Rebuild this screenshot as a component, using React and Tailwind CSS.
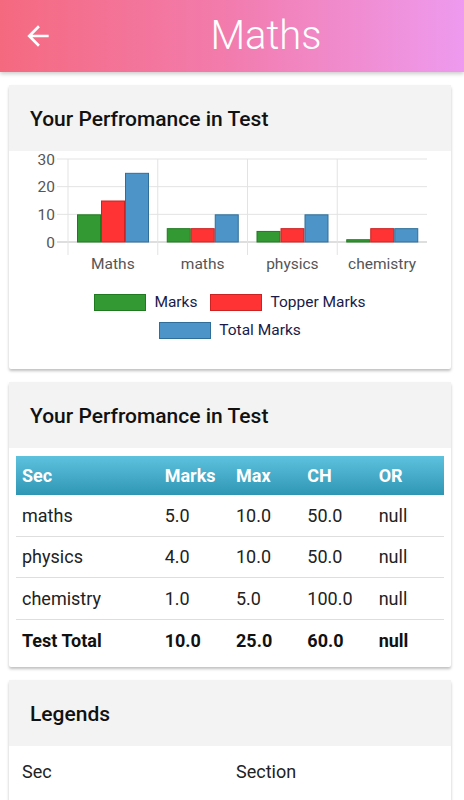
import React from "react";

const chartData = [
  { label: "Maths", marks: 10, topper: 15, total: 25 },
  { label: "maths", marks: 5, topper: 5, total: 10 },
  { label: "physics", marks: 4, topper: 5, total: 10 },
  { label: "chemistry", marks: 1, topper: 5, total: 5 },
];

const rows = [
  ["maths", "5.0", "10.0", "50.0", "null"],
  ["physics", "4.0", "10.0", "50.0", "null"],
  ["chemistry", "1.0", "5.0", "100.0", "null"],
];

const series = [
  { key: "marks", fill: "#339933", stroke: "#1f7a1f" },
  { key: "topper", fill: "#ff3333", stroke: "#cc2222" },
  { key: "total", fill: "#4d94c8", stroke: "#2e6e99" },
];

// chart geometry (px inside the card)
const X0 = 59;
const X1 = 418;
const Y0 = 91;
const UNIT = 2.767;
const CAT = (X1 - X0) / 4;

const BarChart = () => (
  <svg width="442" height="142" className="block">
    {/* horizontal grid */}
    {[0, 10, 20, 30].map((v) => (
      <g key={v}>
        <line
          x1={48}
          x2={X1}
          y1={Y0 - v * UNIT}
          y2={Y0 - v * UNIT}
          stroke={v === 0 ? "#bdbdbd" : "#e3e3e3"}
          strokeWidth="1"
        />
        <text
          x={46}
          y={Y0 - v * UNIT + 5.5}
          textAnchor="end"
          fontSize="15.5"
          fill="#555"
        >
          {v}
        </text>
      </g>
    ))}
    {/* vertical grid */}
    {[0, 1, 2, 3].map((i) => (
      <line
        key={i}
        x1={X0 + i * CAT}
        x2={X0 + i * CAT}
        y1={8}
        y2={104}
        stroke="#e3e3e3"
        strokeWidth="1"
      />
    ))}
    {chartData.map((d, i) => {
      const c = X0 + i * CAT;
      return (
        <g key={d.label}>
          {series.map((s, j) => {
            const h = d[s.key] * UNIT;
            return (
              <rect
                key={s.key}
                x={c + 9 + j * 24 + 0.5}
                y={Y0 - h + 0.5}
                width={23}
                height={h - 0.5}
                fill={s.fill}
                stroke={s.stroke}
                strokeWidth="1"
              />
            );
          })}
          <text
            x={c + CAT / 2}
            y={117.5}
            textAnchor="middle"
            fontSize="15.5"
            fill="#555"
          >
            {d.label}
          </text>
        </g>
      );
    })}
  </svg>
);

const LegendItem = ({ fill, stroke, label }) => (
  <div className="flex items-center gap-[8px]">
    <span
      className="block w-[52px] h-[17px] border"
      style={{ backgroundColor: fill, borderColor: stroke }}
    />
    <span className="text-[15.5px] leading-none text-[#1a1a48]">{label}</span>
  </div>
);

const Card = ({ title, children, className = "" }) => (
  <div
    className={
      "bg-white rounded-[2px] shadow-[0_2px_3px_rgba(0,0,0,0.25)] " + className
    }
  >
    <div className="h-[66px] bg-[#f3f3f3] flex items-center px-[21px] pt-[4px]">
      <h2 className="text-[21px] font-medium text-[#111]">{title}</h2>
    </div>
    {children}
  </div>
);

export default function App() {
  return (
    <div
      className="min-h-screen bg-white"
      style={{ fontFamily: "Roboto, 'Noto Sans', sans-serif" }}
    >
      {/* top bar */}
      <header className="h-[72px] flex items-center bg-gradient-to-r from-[#f5697f] via-[#f27cae] to-[#ee9aef] shadow-[0_2px_4px_rgba(0,0,0,0.2)] relative z-10">
        <button className="w-[68px] h-full flex items-center pl-[22px]">
          <svg width="32" height="32" viewBox="0 0 24 24" fill="white">
            <path d="M20 11H7.83l5.59-5.59L12 4l-8 8 8 8 1.41-1.41L7.83 13H20v-2z" />
          </svg>
        </button>
        <h1 className="flex-1 text-center text-white text-[40px] font-light leading-none">
          Maths
        </h1>
      </header>

      <main className="pl-[9px] pr-[13px] pt-[13px] flex flex-col gap-[13px]">
        {/* chart card */}
        <Card title="Your Perfromance in Test">
          <BarChart />
          <div className="flex flex-col items-center gap-[11px] pt-[1px] pb-[30px]">
            <div className="flex items-center gap-[13px]">
              <LegendItem fill="#339933" stroke="#1f7a1f" label="Marks" />
              <LegendItem fill="#ff3333" stroke="#cc2222" label="Topper Marks" />
            </div>
            <LegendItem fill="#4d94c8" stroke="#2e6e99" label="Total Marks" />
          </div>
        </Card>

        {/* table card */}
        <Card title="Your Perfromance in Test" className="pb-[6px]">
          <div className="mx-[7px] mt-[8px] text-[18px] text-[#222]">
            <div className="grid grid-cols-6 h-[39px] items-center bg-gradient-to-b from-[#5cc2de] to-[#2e96b4] text-white font-bold">
              <div className="col-span-2 px-[6px]">Sec</div>
              <div className="px-[6px]">Marks</div>
              <div className="px-[6px]">Max</div>
              <div className="px-[6px]">CH</div>
              <div className="px-[6px]">OR</div>
            </div>
            {rows.map((r) => (
              <div
                key={r[0]}
                className="grid grid-cols-6 h-[41.5px] items-center border-b border-[#dedede]"
              >
                <div className="col-span-2 px-[6px]">{r[0]}</div>
                <div className="px-[6px]">{r[1]}</div>
                <div className="px-[6px]">{r[2]}</div>
                <div className="px-[6px]">{r[3]}</div>
                <div className="px-[6px]">{r[4]}</div>
              </div>
            ))}
            <div className="grid grid-cols-6 h-[41px] items-center font-bold text-[#111]">
              <div className="col-span-2 px-[6px]">Test Total</div>
              <div className="px-[6px]">10.0</div>
              <div className="px-[6px]">25.0</div>
              <div className="px-[6px]">60.0</div>
              <div className="px-[6px]">null</div>
            </div>
          </div>
        </Card>

        {/* legends card */}
        <Card title="Legends" className="pb-[12px]">
          <div className="mx-[7px] mt-[5px] text-[18px] text-[#222]">
            <div className="grid grid-cols-2 h-[41px] items-center">
              <div className="px-[6px]">Sec</div>
              <div className="px-[6px]">Section</div>
            </div>
          </div>
        </Card>
      </main>
    </div>
  );
}
